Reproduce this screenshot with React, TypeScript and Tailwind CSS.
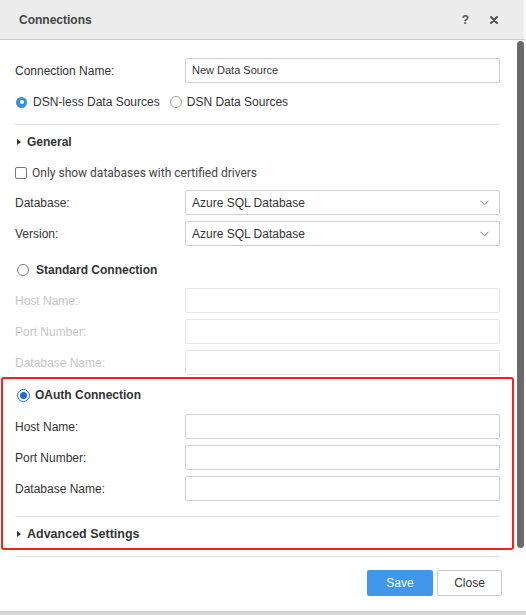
import React from "react";

const font = { fontFamily: '"Liberation Sans", Arial, sans-serif' };

function Triangle() {
  return (
    <svg width="4" height="6" viewBox="0 0 4 6" className="mr-[6px] shrink-0">
      <path d="M0 0 L4 3 L0 6 Z" fill="#333" />
    </svg>
  );
}

function Chevron() {
  return (
    <svg width="9" height="6" viewBox="0 0 9 6" className="shrink-0">
      <path d="M0.5 0.8 L4.5 4.8 L8.5 0.8" fill="none" stroke="#777" strokeWidth="1" />
    </svg>
  );
}

function Field({ label, disabled }: { label: string; disabled?: boolean }) {
  return (
    <div className="flex items-center h-[25px]">
      <div className={`w-[170px] text-[12px] ${disabled ? "text-[#c6c6c6]" : "text-[#333]"}`}>{label}</div>
      <div
        className={`flex-1 h-[25px] rounded-[2px] border bg-white ${disabled ? "border-[#e6e6e6]" : "border-[#cfcfcf]"}`}
      />
    </div>
  );
}

function SelectRow({ label, value }: { label: string; value: string }) {
  return (
    <div className="flex items-center h-[25px]">
      <div className="w-[170px] text-[12px] text-[#333]">{label}</div>
      <div className="flex-1 h-[25px] rounded-[2px] border border-[#cfcfcf] bg-white flex items-center pl-[6px] pr-[10px]">
        <span className="flex-1 text-[12px] text-[#333]">{value}</span>
        <Chevron />
      </div>
    </div>
  );
}

export default function App() {
  return (
    <div className="w-[526px] h-[615px] bg-white overflow-hidden flex flex-col" style={font}>
      {/* title bar */}
      <div className="h-[40px] shrink-0 bg-[#ececec] border-b border-[#c9c9c9] flex items-center pl-[19px] pr-[25px] border-r-[3px] border-r-[#f4f4f4]">
        <div className="flex-1 text-[12px] font-bold text-[#444]">Connections</div>
        <span className="text-[12px] font-bold text-[#555] mr-[21px]">?</span>
        <svg width="8" height="8" viewBox="0 0 8 8">
          <path d="M1 1 L7 7 M7 1 L1 7" stroke="#555" strokeWidth="2" strokeLinecap="round" />
        </svg>
      </div>

      <div className="flex flex-1 min-h-0">
        {/* content */}
        <div className="w-[516px] pl-[15px] pr-[16px] flex flex-col">
          <div className="flex items-center h-[25px] mt-[18px]">
            <div className="w-[170px] text-[12px] text-[#333]">Connection Name:</div>
            <div className="flex-1 h-[25px] rounded-[2px] border border-[#cfcfcf] flex items-center pl-[6px] text-[11px] text-[#333]">
              New Data Source
            </div>
          </div>

          <div className="flex items-center h-[20px] mt-[9px] text-[12px] text-[#333]">
            <span className="w-[11px] h-[11px] rounded-full bg-[#3a8ee6] flex items-center justify-center mr-[6px] ml-[1px]">
              <span className="w-[4px] h-[4px] rounded-full bg-white" />
            </span>
            <span>DSN-less Data Sources</span>
            <span className="w-[12px] h-[12px] rounded-full border border-[#a0a0a0] ml-[10px] mr-[5px]" />
            <span>DSN Data Sources</span>
          </div>

          <div className="h-px bg-[#e2e2e2] mt-[12px]" />

          <div className="flex items-center h-[20px] mt-[7px] pl-[2px]">
            <Triangle />
            <span className="text-[12px] font-bold text-[#333]">General</span>
          </div>

          <div className="flex items-center h-[20px] mt-[11px]">
            <span className="w-[12px] h-[12px] rounded-[2px] border border-[#777] bg-white mr-[5px]" />
            <span className="text-[12px] text-[#444]" style={{ fontFamily: 'Roboto, "Liberation Sans", sans-serif' }}>
              Only show databases with certified drivers
            </span>
          </div>

          <div className="flex flex-col gap-[6px] mt-[7px]">
            <SelectRow label="Database:" value="Azure SQL Database" />
            <SelectRow label="Version:" value="Azure SQL Database" />
          </div>

          <div className="flex items-center h-[20px] mt-[14px] pl-[2px]">
            <span className="w-[12px] h-[12px] rounded-full border border-[#777] bg-white mr-[7px]" />
            <span className="text-[12px] font-bold text-[#333]">Standard Connection</span>
          </div>

          <div className="flex flex-col gap-[6px] mt-[8px]">
            <Field label="Host Name:" disabled />
            <Field label="Port Number:" disabled />
            <Field label="Database Name:" disabled />
          </div>

          {/* highlighted OAuth section */}
          <div className="-ml-[14px] -mr-[14px] mt-[2px] border-2 border-[#f5211b] rounded-[3px] pl-[12px] pr-[12px] pt-[6px] pb-[4px] flex flex-col">
            <div className="flex items-center h-[20px] pl-[2px]">
              <span className="w-[13px] h-[13px] rounded-full border-[1.5px] border-[#1f6fd6] bg-white flex items-center justify-center mr-[5px]">
                <span className="w-[7px] h-[7px] rounded-full bg-[#1f6fd6]" />
              </span>
              <span className="text-[12px] font-bold text-[#333]">OAuth Connection</span>
            </div>

            <div className="flex flex-col gap-[6px] mt-[9px]">
              <Field label="Host Name:" />
              <Field label="Port Number:" />
              <Field label="Database Name:" />
            </div>

            <div className="h-px bg-[#e2e2e2] mt-[15px]" />

            <div className="flex items-center h-[20px] mt-[7px] pl-[2px]">
              <Triangle />
              <span className="text-[12.5px] font-bold text-[#333]">Advanced Settings</span>
            </div>
          </div>

          <div className="h-px bg-[#e2e2e2] mt-[6px]" />

          <div className="flex justify-end gap-[4px] mt-[13px] -mr-[2px]">
            <button className="w-[66px] h-[26px] rounded-[2px] bg-[#4096ea] text-white text-[12px]">Save</button>
            <button className="w-[65px] h-[26px] rounded-[2px] border border-[#cccccc] bg-white text-[#333] text-[12px]">
              Close
            </button>
          </div>
        </div>

        {/* scrollbar */}
        <div className="w-[10px] flex flex-col pt-[1px] pl-[1px] pr-[2px]">
          <div className="w-[7px] h-[507px] rounded-[4px] bg-[#6a6a6a]" />
        </div>
      </div>

      <div className="h-[4px] shrink-0 bg-[#d6d6d6] border-t border-[#c8c8c8]" />
    </div>
  );
}
